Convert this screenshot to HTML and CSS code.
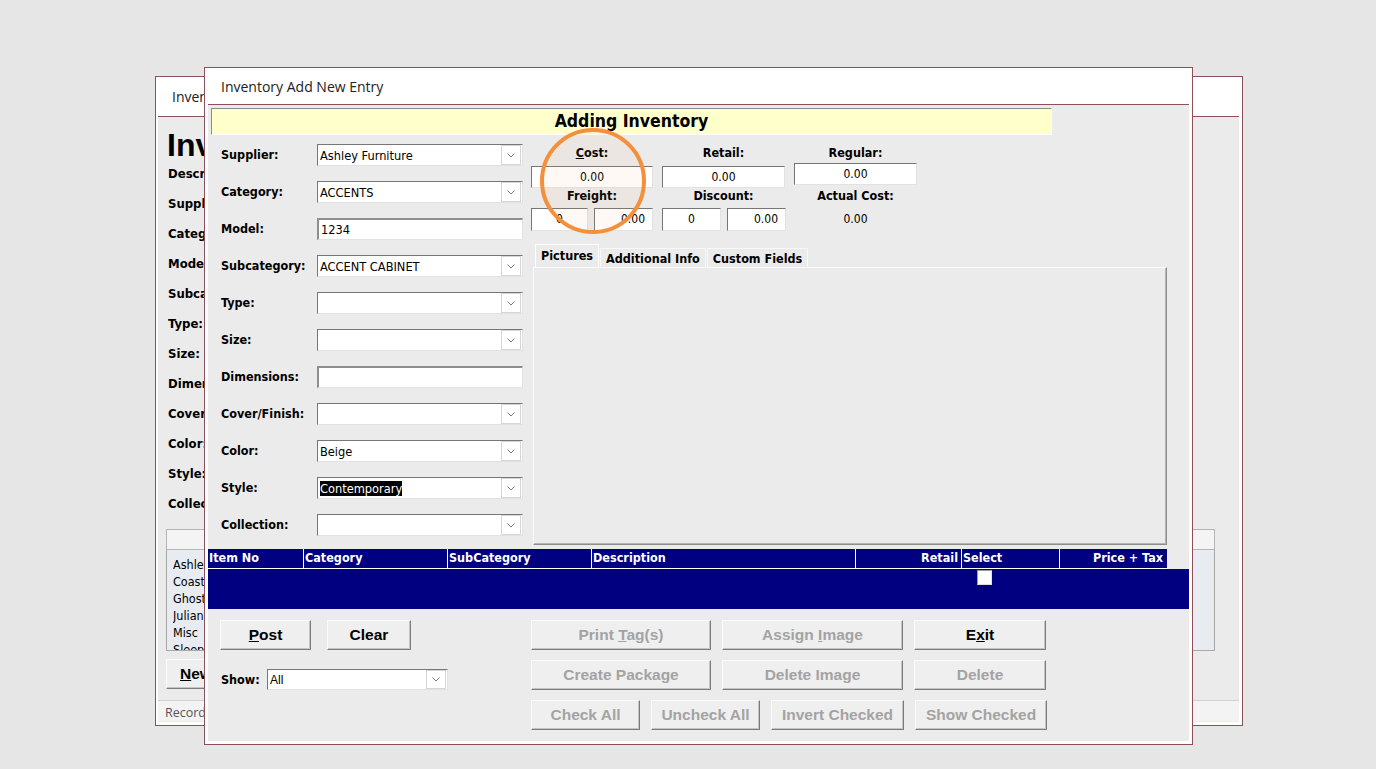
FILE: index.html
```html
<!DOCTYPE html>
<html lang="en">

<head>
    <meta charset="UTF-8">
    <meta name="viewport" content="width=device-width, initial-scale=1.0">
    <title>Inventory Add New Entry</title>
    <link rel="stylesheet" href="styles.css">
</head>

<body>
    <div class="desktop">

        <!-- fenêtre en arrière-plan -->
        <div class="window back">
            <div class="titlebar">Inventory</div>
            <div class="win-body back-body">
                <h1 class="back-heading">Inventory</h1>
                <div class="back-fields">
                    <div>Description:</div>
                    <div>Supplier:</div>
                    <div>Category:</div>
                    <div>Model:</div>
                    <div>Subcategory:</div>
                    <div>Type:</div>
                    <div>Size:</div>
                    <div>Dimensions:</div>
                    <div>Cover/Finish:</div>
                    <div>Color:</div>
                    <div>Style:</div>
                    <div>Collection:</div>
                </div>
                <div class="back-bar"></div>
                <ul class="back-list">
                    <li>Ashley Furniture</li>
                    <li>Coaster</li>
                    <li>Ghost</li>
                    <li>Julian</li>
                    <li>Misc</li>
                    <li>Sleep</li>
                </ul>
                <button class="btn back-new"><u>N</u>ew</button>
                <div class="back-status">Record: 1 of 1</div>
            </div>
        </div>

        <!-- fenêtre d'ajout -->
        <div class="window front">
            <div class="titlebar">Inventory Add New Entry</div>
            <div class="win-body front-body">
                <div class="heading">Adding Inventory</div>

                <div class="main">
                    <div class="fields">
                        <div class="field">
                            <label>Supplier:</label>
                            <div class="combo"><span>Ashley Furniture</span><i class="arrow"><svg width="8" height="5" viewBox="0 0 8 5"><polyline points="0.5,0.5 4,4 7.5,0.5" /></svg></i></div>
                        </div>
                        <div class="field">
                            <label>Category:</label>
                            <div class="combo"><span>ACCENTS</span><i class="arrow"><svg width="8" height="5" viewBox="0 0 8 5"><polyline points="0.5,0.5 4,4 7.5,0.5" /></svg></i></div>
                        </div>
                        <div class="field">
                            <label>Model:</label>
                            <div class="text-input">1234</div>
                        </div>
                        <div class="field">
                            <label>Subcategory:</label>
                            <div class="combo"><span>ACCENT CABINET</span><i class="arrow"><svg width="8" height="5" viewBox="0 0 8 5"><polyline points="0.5,0.5 4,4 7.5,0.5" /></svg></i></div>
                        </div>
                        <div class="field">
                            <label>Type:</label>
                            <div class="combo"><span></span><i class="arrow"><svg width="8" height="5" viewBox="0 0 8 5"><polyline points="0.5,0.5 4,4 7.5,0.5" /></svg></i></div>
                        </div>
                        <div class="field">
                            <label>Size:</label>
                            <div class="combo"><span></span><i class="arrow"><svg width="8" height="5" viewBox="0 0 8 5"><polyline points="0.5,0.5 4,4 7.5,0.5" /></svg></i></div>
                        </div>
                        <div class="field">
                            <label>Dimensions:</label>
                            <div class="text-input"></div>
                        </div>
                        <div class="field">
                            <label>Cover/Finish:</label>
                            <div class="combo"><span></span><i class="arrow"><svg width="8" height="5" viewBox="0 0 8 5"><polyline points="0.5,0.5 4,4 7.5,0.5" /></svg></i></div>
                        </div>
                        <div class="field">
                            <label>Color:</label>
                            <div class="combo"><span>Beige</span><i class="arrow"><svg width="8" height="5" viewBox="0 0 8 5"><polyline points="0.5,0.5 4,4 7.5,0.5" /></svg></i></div>
                        </div>
                        <div class="field">
                            <label>Style:</label>
                            <div class="combo"><span><mark>Contemporary</mark></span><i class="arrow"><svg width="8" height="5" viewBox="0 0 8 5"><polyline points="0.5,0.5 4,4 7.5,0.5" /></svg></i></div>
                        </div>
                        <div class="field">
                            <label>Collection:</label>
                            <div class="combo"><span></span><i class="arrow"><svg width="8" height="5" viewBox="0 0 8 5"><polyline points="0.5,0.5 4,4 7.5,0.5" /></svg></i></div>
                        </div>
                    </div>

                    <div class="details">
                        <div class="prices">
                            <div class="cap"><u>C</u>ost:</div>
                            <div class="cap">Retail:</div>
                            <div class="cap">Regular:</div>
                            <div class="box">0.00</div>
                            <div class="box">0.00</div>
                            <div class="box regular">0.00</div>
                            <div class="cap cap-2">Freight:</div>
                            <div class="cap cap-2">Discount:</div>
                            <div class="cap cap-2">Actual Cost:</div>
                            <div class="pair">
                                <div class="box w-57">0</div>
                                <div class="box box-right w-59">0.00</div>
                            </div>
                            <div class="pair">
                                <div class="box w-59">0</div>
                                <div class="box box-right w-59">0.00</div>
                            </div>
                            <div class="value">0.00</div>
                        </div>

                        <div class="tabs">
                            <div class="tab active">Pictures</div>
                            <div class="tab">Additional Info</div>
                            <div class="tab">Custom Fields</div>
                        </div>
                        <div class="tab-panel"></div>
                    </div>
                </div>

                <div class="grid">
                    <div class="grid-head">
                        <div class="col c-item">Item No</div>
                        <div class="col c-cat">Category</div>
                        <div class="col c-sub">SubCategory</div>
                        <div class="col c-desc">Description</div>
                        <div class="col c-retail">Retail</div>
                        <div class="col c-select">Select</div>
                        <div class="col c-price">Price + Tax</div>
                    </div>
                    <div class="grid-row">
                        <span class="check"></span>
                    </div>
                </div>

                <div class="actions">
                    <div class="actions-left">
                        <div class="btn-row">
                            <button class="btn btn-post"><u>P</u>ost</button>
                            <button class="btn btn-clear">Clear</button>
                        </div>
                        <div class="show-row">
                            <label>Show:</label>
                            <div class="combo combo-show"><span>All</span><i class="arrow"><svg width="8" height="5" viewBox="0 0 8 5"><polyline points="0.5,0.5 4,4 7.5,0.5" /></svg></i></div>
                        </div>
                    </div>
                    <div class="actions-right">
                        <div class="btn-row">
                            <button class="btn off w-180">Print <u>T</u>ag(s)</button>
                            <button class="btn off w-181">Assign <u>I</u>mage</button>
                            <button class="btn w-132">E<u>x</u>it</button>
                        </div>
                        <div class="btn-row">
                            <button class="btn off w-180">Create Package</button>
                            <button class="btn off w-181">Delete Image</button>
                            <button class="btn off w-132">Delete</button>
                        </div>
                        <div class="btn-row">
                            <button class="btn off w-109">Check All</button>
                            <button class="btn off w-109">Uncheck All</button>
                            <button class="btn off w-133">Invert Checked</button>
                            <button class="btn off w-132">Show Checked</button>
                        </div>
                    </div>
                </div>
            </div>

            <!-- cercle de mise en évidence -->
            <div class="highlight"></div>
        </div>
    </div>
</body>

</html>
```

FILE: styles.css
```css
* {
    margin: 0;
    padding: 0;
    box-sizing: border-box;
}

body {
    background: #e6e6e6;
    font-family: "DejaVu Sans Condensed", "DejaVu Sans", sans-serif;
    font-size: 12px;
    color: #000;
}

.desktop {
    position: relative;
    width: 1376px;
    height: 769px;
    overflow: hidden;
}

/* Fenêtres */

.window {
    position: absolute;
    display: flex;
    flex-direction: column;
    background: #fff;
    border: 1px solid #8d4f58;
}

.back {
    left: 155px;
    top: 76px;
    width: 1088px;
    height: 650px;
}

.front {
    left: 204px;
    top: 67px;
    width: 989px;
    height: 678px;
}

.titlebar {
    flex: none;
    display: flex;
    align-items: center;
    padding-left: 16px;
    font-family: "Open Sans", sans-serif;
    font-size: 14px;
    color: #222;
}

.back .titlebar {
    height: 39px;
}

.front .titlebar {
    height: 36px;
}

.win-body {
    flex: 1;
    display: flex;
    flex-direction: column;
    background: #ebebeb;
    border-top: 1px solid #8d4f58;
    margin: 0 3px 3px 3px;
    overflow: hidden;
}

.back .win-body {
    margin-left: 2px;
}

/* Fenêtre arrière (presque entièrement cachée) */

.back-heading {
    width: 46px;
    margin: 13px 0 0 9px;
    font-family: "Liberation Sans", Arial, sans-serif;
    font-size: 32px;
    line-height: 30px;
    white-space: nowrap;
    overflow: hidden;
}

.back-fields {
    width: 36px;
    margin: 2px 0 0 10px;
    font-weight: bold;
    font-size: 13px;
    white-space: nowrap;
    overflow: hidden;
}

.back-fields div {
    line-height: 24px;
    margin-bottom: 6px;
}

.back-bar {
    margin: 7px 0 0 8px;
    width: 1049px;
    height: 21px;
    background: #f4f4f4;
    border: 1px solid #b4b4b4;
}

.back-list {
    list-style: none;
    margin-left: 8px;
    width: 1049px;
    height: 101px;
    padding: 6px 0 0 6px;
    background: #e8ebf0;
    border: 1px solid #a8a8a8;
    border-top: none;
    line-height: 17px;
    font-size: 12.5px;
    overflow: hidden;
}

.back-list li {
    width: 32px;
    overflow: hidden;
    white-space: nowrap;
}

.back-new {
    margin: 8px 0 0 8px;
    width: 60px;
    height: 32px;
    font-size: 17px;
    color: #000;
}

.back-status {
    margin-top: 11px;
    height: 21px;
    padding-left: 7px;
    line-height: 23px;
    background: #f3f3f3;
    border-top: 1px solid #d0d0d0;
    font-family: "Open Sans", sans-serif;
    font-size: 12.5px;
    color: #555;
}

/* Fenêtre d'ajout */

.heading {
    margin: 3px 0 0 3px;
    width: 841px;
    height: 27px;
    background: #ffffcc;
    border: 1px solid;
    border-color: #8a8a8a #fff #fff #8a8a8a;
    text-align: center;
    font-weight: bold;
    font-size: 17.5px;
    line-height: 25px;
}

.main {
    display: flex;
    margin-top: 9px;
}

.fields {
    width: 323px;
    padding-left: 13px;
}

.field {
    display: flex;
    align-items: center;
    height: 22px;
    margin-bottom: 15px;
}

.field:last-child {
    margin-bottom: 0;
}

.field label,
.show-row label {
    font-weight: bold;
    font-size: 12.5px;
}

.field label {
    width: 96px;
    margin-top: -2px;
}

.combo,
.text-input {
    display: flex;
    align-items: center;
    width: 206px;
    height: 22px;
    background: #fff;
    border: 1px solid;
    border-color: #767676 #e2e2e2 #e2e2e2 #767676;
    padding-left: 2px;
    font-size: 12.7px;
    white-space: nowrap;
}

.text-input {
    border-width: 2px 1px 1px 2px;
    border-color: #8f8f8f #e2e2e2 #e2e2e2 #8f8f8f;
}

.combo span {
    flex: 1;
}

.combo mark {
    background: #000;
    color: #fff;
}

.arrow {
    display: flex;
    align-items: center;
    justify-content: center;
    width: 20px;
    height: 20px;
    margin-right: 1px;
    border: 1px solid #d6d6d6;
    background: #fff;
}

.arrow polyline {
    fill: none;
    stroke: #7a7a7a;
    stroke-width: 1;
}

/* Prix */

.details {
    display: flex;
    flex-direction: column;
    width: 636px;
    margin-top: 2px;
}

.prices {
    display: grid;
    grid-template-columns: 122px 123px 123px;
    column-gap: 9px;
}

.cap {
    text-align: center;
    font-weight: bold;
    font-size: 12.5px;
    line-height: 14px;
}

.cap-2 {
    margin-top: 1px;
}

.box {
    height: 22px;
    margin-top: 6px;
    background: #fff;
    border: 1px solid;
    border-color: #767676 #e2e2e2 #e2e2e2 #767676;
    text-align: center;
    line-height: 20px;
}

.box.regular {
    margin-top: 3px;
    margin-bottom: 3px;
}

.pair {
    display: flex;
    gap: 6px;
    margin-top: 5px;
}

.pair .box {
    flex: none;
    height: 23px;
    margin-top: 0;
    line-height: 21px;
}

.pair .box-right {
    text-align: right;
    padding-right: 7px;
}

.w-57 { width: 57px; }
.w-59 { width: 59px; }

.value {
    margin-top: 5px;
    line-height: 23px;
    text-align: center;
}

/* Onglets */

.tabs {
    display: flex;
    align-items: flex-end;
    height: 23px;
    margin: 13px 0 0 4px;
}

.tab {
    height: 19px;
    padding: 0 5px;
    font-weight: bold;
    font-size: 12.5px;
    line-height: 19px;
    background: #ebebeb;
    border: 1px solid #f8f8f8;
    border-bottom: none;
    margin-right: 1px;
}

.tab.active {
    height: 23px;
    padding-top: 1px;
    border-color: #fff;
}

.tab-panel {
    margin-left: 2px;
    width: 634px;
    height: 278px;
    border: 1px solid;
    border-color: #fafafa #8c8c8c #8c8c8c #fafafa;
    box-shadow: inset -1px -1px 0 #b4b4b4;
}

/* Grille */

.grid {
    margin-top: 4px;
}

.grid-head {
    display: flex;
    width: 959px;
    height: 20px;
    background: #000080;
    border-bottom: 1px solid #fff;
    color: #fff;
    font-weight: bold;
    font-size: 12.5px;
    line-height: 18px;
}

.col {
    padding-left: 1px;
    border-right: 1px solid #fff;
}

.c-item { width: 96px; }
.c-cat { width: 144px; }
.c-sub { width: 144px; }
.c-desc { width: 264px; }
.c-retail { width: 106px; text-align: right; padding-right: 3px; }
.c-select { width: 98px; }
.c-price { width: 107px; text-align: right; padding-right: 4px; border-right: none; }

.grid-row {
    height: 40px;
    background: #000080;
    padding: 1px 0 0 769px;
}

.check {
    display: block;
    width: 15px;
    height: 15px;
    background: #fff;
    border: 1px solid;
    border-color: #9a9a9a #e0e0e0 #e0e0e0 #9a9a9a;
}

/* Boutons */

.actions {
    display: flex;
    margin-top: 11px;
}

.actions-left {
    width: 323px;
    padding-left: 12px;
}

.actions-right {
    display: flex;
    flex-direction: column;
    gap: 10px;
}

.btn-row {
    display: flex;
    gap: 11px;
}

.btn {
    height: 30px;
    background: #efefef;
    border: 1px solid;
    border-color: #fbfbfb #7c7c7c #7c7c7c #fbfbfb;
    box-shadow: inset -1px -1px 0 #c4c4c4;
    font-family: "Liberation Sans", Arial, sans-serif;
    font-weight: bold;
    font-size: 15.5px;
    color: #000;
}

.btn.off {
    color: #a3a3a3;
}

.btn-post { width: 91px; }
.btn-clear { width: 84px; margin-left: 5px; }

.w-109 { width: 109px; }
.w-132 { width: 132px; }
.w-133 { width: 133px; }
.w-180 { width: 180px; }
.w-181 { width: 181px; }

.show-row {
    display: flex;
    align-items: center;
    margin-top: 19px;
    padding-left: 1px;
}

.show-row label {
    width: 46px;
}

.combo-show {
    width: 181px;
    height: 21px;
    font-family: "Liberation Sans", Arial, sans-serif;
    font-size: 12px;
}

.combo-show .arrow {
    height: 19px;
}

/* Cercle orange */

.highlight {
    position: absolute;
    left: 335px;
    top: 60px;
    width: 106px;
    height: 106px;
    border: 4px solid #f4903c;
    border-radius: 50%;
    background: rgba(244, 144, 60, 0.05);
}
```
